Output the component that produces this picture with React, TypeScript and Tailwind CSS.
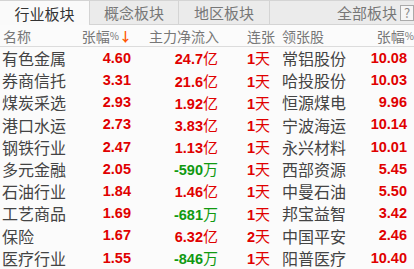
const rows = [
  { name: "有色金属", pct: "4.60", flow: "24.7", unit: "亿", up: true, days: "1", lead: "常铝股份", lpct: "10.08" },
  { name: "券商信托", pct: "3.31", flow: "21.6", unit: "亿", up: true, days: "1", lead: "哈投股份", lpct: "10.03" },
  { name: "煤炭采选", pct: "2.93", flow: "1.92", unit: "亿", up: true, days: "1", lead: "恒源煤电", lpct: "9.96" },
  { name: "港口水运", pct: "2.73", flow: "3.83", unit: "亿", up: true, days: "1", lead: "宁波海运", lpct: "10.14" },
  { name: "钢铁行业", pct: "2.47", flow: "1.13", unit: "亿", up: true, days: "1", lead: "永兴材料", lpct: "10.01" },
  { name: "多元金融", pct: "2.05", flow: "-590", unit: "万", up: false, days: "1", lead: "西部资源", lpct: "5.45" },
  { name: "石油行业", pct: "1.84", flow: "1.46", unit: "亿", up: true, days: "1", lead: "中曼石油", lpct: "5.50" },
  { name: "工艺商品", pct: "1.69", flow: "-681", unit: "万", up: false, days: "1", lead: "邦宝益智", lpct: "3.42" },
  { name: "保险", pct: "1.67", flow: "6.32", unit: "亿", up: true, days: "2", lead: "中国平安", lpct: "2.46" },
  { name: "医疗行业", pct: "1.55", flow: "-846", unit: "万", up: false, days: "1", lead: "阳普医疗", lpct: "10.40" },
];

const cjk = "font-['Noto_Sans_CJK_SC',sans-serif]";
const num = "font-['Liberation_Sans','Noto_Sans_CJK_SC',sans-serif] font-bold";

export default function App() {
  return (
    <div className={`w-[414px] h-[269px] overflow-hidden bg-[#fbfbfb] ${cjk}`}>
      {/* tabs */}
      <div className="flex h-[25px] border-t border-[#d4d4d4] text-[15px] leading-none">
        <div className="w-[90px] flex items-center justify-center bg-[#fafafa] border-r border-[#d4d4d4] text-[#333]">
          行业板块
        </div>
        <div className="w-[89px] flex items-center justify-center bg-[#ebebeb] border-r border-b border-[#d4d4d4] text-[#777]">
          概念板块
        </div>
        <div className="w-[91px] flex items-center justify-center bg-[#ebebeb] border-r border-b border-[#d4d4d4] text-[#777]">
          地区板块
        </div>
        <div className="flex-1 flex items-center justify-end bg-[#ebebeb] border-b border-[#d4d4d4] text-[#777]">
          <span>全部板块</span>
          <span className="ml-[3px] w-[14px] h-[16px] border border-[#aaa] bg-[#f6f6f6] text-[13px] flex items-center justify-center text-[#888]">
            ?
          </span>
        </div>
      </div>

      {/* header */}
      <div className="flex items-center h-[22px] border-b border-[#dcdcdc] text-[14px] text-[#777] leading-none whitespace-nowrap">
        <div className="w-[88px] pl-[3px]">名称</div>
        <div className="w-[44px] flex justify-end items-center">
          <span>张幅</span>
          <span className="text-[10px]">%</span>
          <span className="text-[#ff5500] text-[13px] font-bold">↓</span>
        </div>
        <div className="w-[87px] text-right">主力净流入</div>
        <div className="w-[61px] pl-[28px]">连张</div>
        <div className="w-[70px] pl-[2px]">领张股</div>
        <div className="flex-1 flex justify-end items-center">
          <span>张幅</span>
          <span className="text-[10px]">%</span>
        </div>
      </div>

      {/* rows */}
      {rows.map((r) => (
        <div key={r.name} className="flex items-center h-[22.2px] leading-none">
          <div className="w-[88px] pl-[2px] text-[16px] text-[#444]">{r.name}</div>
          <div className={`w-[43px] text-right text-[14.5px] text-[#e00000] ${num}`}>{r.pct}</div>
          <div className={`w-[87px] text-right ${r.up ? "text-[#e00000]" : "text-[#119911]"}`}>
            <span className={`text-[14.5px] ${num}`}>{r.flow}</span>
            <span className="text-[15px]">{r.unit}</span>
          </div>
          <div className="w-[62px] pl-[29px] text-[#e00000]">
            <span className={`text-[14.5px] ${num}`}>{r.days}</span>
            <span className="text-[15px]">天</span>
          </div>
          <div className="w-[84px] pl-[2px] text-[16px] text-[#444]">{r.lead}</div>
          <div className={`w-[43px] text-right text-[14.5px] text-[#e00000] ${num}`}>{r.lpct}</div>
        </div>
      ))}
    </div>
  );
}
